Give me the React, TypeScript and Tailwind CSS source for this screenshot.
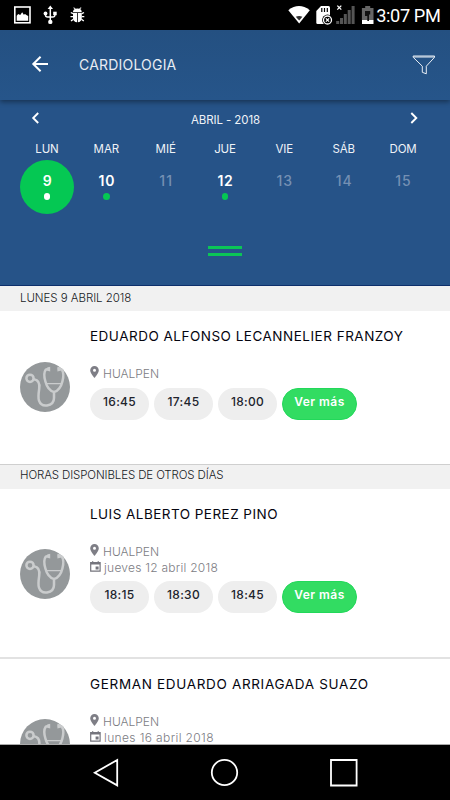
import React from "react";

function StatusBar() {
  return (
    <div className="flex h-[30px] shrink-0 bg-black">
      <svg width="450" height="30" viewBox="0 0 450 30" role="img" aria-label="Estado">
        <rect x="14.8" y="7" width="15.2" height="15.8" fill="none" stroke="#fff" strokeWidth="1.6" />
        <path d="M16.7 20.7v-5l1.5-1.800 2 1 2-2.600 1.600 2.400 1.200-.7 1.400 1 1.800 1v4.700z" fill="#fff" />
        <path d="M50.3 21V8M45.5 13v2.3q0 1.600 2 1.600h5.600q1.800 0 1.800-1.600V13" stroke="#fff" strokeWidth="1.500" fill="none" />
        <path d="M50.3 5.400l2.700 3.600h-5.400z" fill="#fff" />
        <circle cx="50.3" cy="21.900" r="2.200" fill="#fff" />
        <circle cx="45.5" cy="13.400" r="1.900" fill="#fff" />
        <path d="M53.200 11.700h3.500v3.500h-3.500z" fill="#fff" />
        <path d="M73 12.200v-.8q.3-1.900 1.700-2.500L73.300 7.900l.6-.6 1.800 1.400q1.700-.5 3.400 0l1.800-1.400.6.600-1.400 1q1.400.8 1.600 2.500v.8z" fill="#fff" />
        <path d="M73 13h4v9.200q-3.700-.3-4-4zM77.800 13h4v5.200q-.4 3.700-4 4z" fill="#fff" />
        <path d="M70.800 12.500l2.200 1.200M84 12.500l-2.200 1.200M70.500 16.600h2.500M84.300 16.600h-2.500M71 21l2.400-1.700M83.800 21l-2.400-1.700" stroke="#fff" strokeWidth="1.400" />
        <path d="M288.300 10.200Q299 1.800 309.800 10.200L299.200 23.400z" fill="#fff" />
        <path d="M295.800 16.800q3.300-1.600 6.600 0L299.200 20.500z" fill="#333" />
        <path d="M321 6h7.500q1.500 0 1.500 1.500V24h-12.500q-1.200 0-1.200-1.200V11z" fill="#fff" />
        <path d="M321.800 8v4M324.500 8v4M327.300 8v4" stroke="#000" strokeWidth="1.200" />
        <circle cx="327.500" cy="20" r="5.400" fill="#000" />
        <circle cx="327.500" cy="20" r="4" fill="none" stroke="#fff" strokeWidth="1.300" />
        <path d="M325.900 18.400l3.200 3.200M329.100 18.400l-3.200 3.200" stroke="#fff" strokeWidth="1.300" />
        <path d="M337.300 5.600l4 4M341.300 5.600l-4 4" stroke="#fff" strokeWidth="1.300" />
        <g fill="#555">
          <rect x="336.200" y="21" width="3" height="3" />
          <rect x="340" y="18" width="3" height="6" />
          <rect x="343.800" y="14" width="3" height="10" />
          <rect x="347.700" y="10" width="3" height="14" />
          <rect x="351.600" y="6" width="3" height="18" />
        </g>
        <path d="M365.200 6h5v2h3.300v12h-11.600V8h3.300z" fill="#666" />
        <path d="M362 20h11.500v4H362z" fill="#fff" />
        <path d="M365 11h5.200v3.500h-1.200v6.500h-1.700v-5H365z" fill="#111" />
        <text x="376.300" y="22.300" fill="#fff" fontSize="18.200" textLength="64.500" fontFamily="Roboto, sans-serif">3:07 PM</text>
      </svg>
    </div>
  );
}

function Header() {
  return (
    <header className="relative z-10 flex h-[70px] shrink-0 items-center bg-linear-to-b from-[#245081] to-[#26558a] text-white shadow-[0_2px_5px_rgba(0,0,0,0.4)]">
      <svg className="mt-[-3px] ml-[31px]" width="18" height="18" viewBox="0 0 18 18" fill="none" stroke="#fff" strokeWidth="2">
        <path d="M17 9H2.500M9.600 1.800L2.300 9l7.300 7.200" />
      </svg>
      <h1 className="mt-[-1px] ml-[30px] text-[14px] leading-none tracking-[0.2px] text-[#e9edf3]">CARDIOLOGIA</h1>
      <svg className="mt-[-1px] mr-[14px] ml-auto" width="24" height="20" viewBox="0 0 24 20" fill="none" stroke="#e8eef5" strokeWidth="1">
        <path d="M1.200 1h21.300v1.300L14.300 11.200v7.600l-4-1.500v-6.100L1.200 2.300zM1.500 2h20.700" />
      </svg>
    </header>
  );
}

type Day = { name: string; num: string; on?: boolean; selected?: boolean };
const days: Day[] = [
  { name: "LUN", num: "9", on: true, selected: true },
  { name: "MAR", num: "10", on: true },
  { name: "MIÉ", num: "11" },
  { name: "JUE", num: "12", on: true },
  { name: "VIE", num: "13" },
  { name: "SÁB", num: "14" },
  { name: "DOM", num: "15" },
];

function Calendar() {
  return (
    <section className="flex h-[186px] shrink-0 flex-col border-b border-[#0d2f6b] bg-[#265388] text-white">
      <div className="flex h-[39px] items-center justify-between px-[31px]">
        <svg className="mt-[-4px]" width="9" height="12" viewBox="0 0 9 12" fill="none" stroke="#fff" strokeWidth="1.900">
          <path d="M7.200 1L2.200 6l5 5" />
        </svg>
        <span className="mt-[2px] ml-[1px] text-[11.500px] leading-none tracking-[-0.1px] text-[#eef2f7]">ABRIL - 2018</span>
        <svg className="mt-[-4px]" width="9" height="12" viewBox="0 0 9 12" fill="none" stroke="#fff" strokeWidth="1.900">
          <path d="M1.300 1l5 5-5 5" />
        </svg>
      </div>
      <div className="grid grid-cols-7 px-[17.300px]">
        {days.map((d) => (
          <div key={d.num} className="flex flex-col items-center">
            <span className="h-[21px] text-[11.500px] leading-[20px] tracking-[-0.1px] text-[#eef2f7]">{d.name}</span>
            <div className={d.selected ? "flex size-[54px] flex-col items-center rounded-full bg-[#05c853]" : "flex size-[54px] flex-col items-center"}>
              <span className={d.on ? "mt-[11px] ml-[1px] text-[14px] leading-[20px] font-semibold tracking-[0.7px]" : "mt-[11px] ml-[1px] text-[14px] leading-[20px] font-medium tracking-[1px] text-[#7590b3]"}>{d.num}</span>
              {d.on && <i className={d.selected ? "mt-[2px] size-[6.500px] rounded-full bg-white" : "mt-[2px] size-[6.500px] rounded-full bg-[#05c853]"} />}
            </div>
          </div>
        ))}
      </div>
      <div className="mt-[32px] flex flex-col items-center gap-[4px]">
        <i className="h-[3px] w-[34px] bg-[#0bc556]" />
        <i className="h-[3px] w-[34px] bg-[#0bc556]" />
      </div>
    </section>
  );
}

function Avatar() {
  return (
    <svg width="50" height="50" viewBox="0 0 50 50" className="shrink-0">
      <circle cx="25" cy="25" r="25" fill="#94989a" />
      <g fill="none" stroke="#cacccd" strokeWidth="2.500" strokeLinecap="round" strokeLinejoin="round">
        <circle cx="10" cy="16.300" r="3.600" />
        <path d="M14 17.200c5 .8 6 4 5.200 9.500-.9 6-1.200 9-.2 12 1.300 3.800 4.500 5.300 8 4.800 4.500-.7 7-3.800 7-7.500v-5" />
        <path d="M28.800 6.800l-3.100 1c-1.600 2.200-1.700 7-.3 11.700 1.200 4.700 4.400 10 8.600 10.500 4.200-.5 7.300-5.800 8.400-10.500 1.200-4.700 1.100-9.500-.5-11.700l-3.100-1" />
        <path d="M26.500 21.700h15" strokeWidth="1.300" />
      </g>
      <path d="M27.300 5.500l2.900-.8v4.800l-2.900-.8zM37.400 4.700l2.900.8v3.200l-2.900.8z" fill="#cacccd" />
    </svg>
  );
}

function SectionTitle({ text, className }: { text: string; className: string }) {
  return (
    <div className={"shrink-0 bg-[#f1f1f1] pl-[20px] text-[11.500px] font-light whitespace-nowrap text-[#16191e] " + className}>{text}</div>
  );
}

type Doctor = { name: string; tracking: string; date?: string; dateTracking?: string; hours: string[]; card: string };

function DoctorCard({ d }: { d: Doctor }) {
  return (
    <article className={"flex shrink-0 bg-white pl-[20px] " + d.card}>
      <div className={d.date ? "mt-[59.500px]" : "mt-[51.300px]"}>
        <Avatar />
      </div>
      <div className="ml-[20px] flex flex-col">
        <h2 className={"mt-[15px] h-[20px] text-[13.500px] leading-[20px] whitespace-nowrap text-[#05050f] " + d.tracking}>{d.name}</h2>
        <div className="mt-[19px] flex h-[16px] items-center">
          <svg width="9" height="12" viewBox="0 0 9 12" className="mt-[-3px]">
            <path fillRule="evenodd" d="M4.500 0A4.300 4.300 0 0 0 .2 4.300C.2 7.400 4.500 12 4.500 12s4.300-4.600 4.300-7.700A4.300 4.300 0 0 0 4.500 0zm0 2.800a1.500 1.500 0 1 1 0 3 1.500 1.500 0 0 1 0-3z" fill="#7e7e86" />
          </svg>
          <span className="mt-[1px] ml-[4px] text-[12px] leading-none font-light text-[#7c7c83]">HUALPEN</span>
        </div>
        {d.date && (
          <div className="flex h-[16px] items-center">
            <svg width="11" height="11" viewBox="0 0 11 11" className="mt-[-2px]">
              <path d="M.7 1.500h9.400v8.700H.7z" fill="none" stroke="#74747c" strokeWidth="1.200" />
              <path d="M.7 1.500h9.400v1.900H.7zM2 .2h1.300v2H2zM7.600.2h1.300v2H7.600zM5.600 5.600h3v2.900h-3z" fill="#74747c" />
            </svg>
            <span className={"mt-[1px] ml-[3px] text-[12px] leading-none font-light whitespace-nowrap text-[#7c7c83] " + d.dateTracking}>{d.date}</span>
          </div>
        )}
        {d.hours.length > 0 && (
          <div className={d.date ? "mt-[5.500px] flex gap-[5px]" : "mt-[6.500px] flex gap-[5px]"}>
            {d.hours.map((h) => (
              <button key={h} className="h-[32px] w-[59px] rounded-full bg-[#eeeeee] pb-[3px] text-[12px] leading-none font-medium tracking-[0.300px] text-[#20232c]">{h}</button>
            ))}
            <button className="h-[32px] w-[75px] rounded-full border border-[#22d85a] bg-[#32dc62] pb-[3px] text-[12px] leading-none font-semibold tracking-[0.500px] whitespace-nowrap text-white">Ver más</button>
          </div>
        )}
      </div>
    </article>
  );
}

const doctors: Doctor[] = [
  { name: "EDUARDO ALFONSO LECANNELIER FRANZOY", tracking: "tracking-[0.500px]", hours: ["16:45", "17:45", "18:00"], card: "h-[154px] border-b border-[#cfcfcf]" },
  { name: "LUIS ALBERTO PEREZ PINO", tracking: "tracking-[0.460px]", date: "jueves 12 abril 2018", dateTracking: "tracking-[0.250px]", hours: ["18:15", "18:30", "18:45"], card: "h-[170px] border-b-2 border-[#e2e2e2]" },
  { name: "GERMAN EDUARDO ARRIAGADA SUAZO", tracking: "tracking-[0.670px]", date: "lunes 16 abril 2018", dateTracking: "tracking-[0.370px]", hours: [], card: "h-[170px]" },
];

function NavBar() {
  return (
    <nav className="flex h-[56px] shrink-0 items-center border-t border-[#aaaaaa] bg-black">
      <svg width="450" height="55" viewBox="0 0 450 55" fill="none" stroke="#fff" strokeWidth="1.800">
        <path d="M117.200 15v25.400L94.800 27.700z" />
        <circle cx="224.500" cy="27.500" r="12.700" />
        <path d="M331 15h25.600v25.500H331z" />
      </svg>
    </nav>
  );
}

export default function App() {
  return (
    <main className="flex h-[800px] w-[450px] flex-col overflow-hidden bg-white font-['Inter',sans-serif]">
      <StatusBar />
      <Header />
      <Calendar />
      <div className="flex min-h-0 flex-1 flex-col overflow-hidden">
        <SectionTitle text="LUNES 9 ABRIL 2018" className="h-[25px] leading-[24px] tracking-[-0.050px]" />
        <DoctorCard d={doctors[0]} />
        <SectionTitle text="HORAS DISPONIBLES DE OTROS DÍAS" className="h-[24px] leading-[21px] tracking-[-0.120px]" />
        <DoctorCard d={doctors[1]} />
        <DoctorCard d={doctors[2]} />
      </div>
      <NavBar />
    </main>
  );
}
